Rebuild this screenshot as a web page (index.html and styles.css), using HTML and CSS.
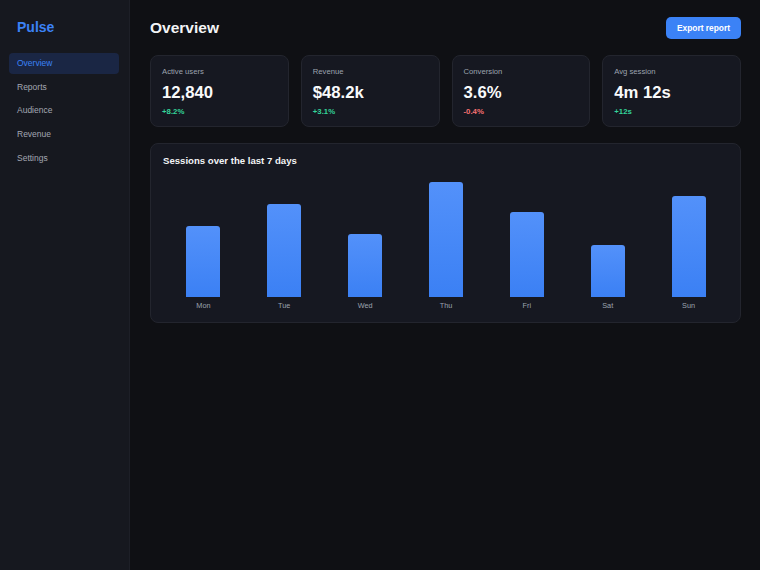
FILE: index.html
```html
<!DOCTYPE html>
<html lang="en">
<head>
	<meta charset="UTF-8">
	<meta name="viewport" content="width=device-width, initial-scale=1.0">
	<title>Pulse - Overview</title>
	<link rel="stylesheet" href="styles.css">
</head>
<body>
<aside class="sidebar">
	<div class="logo">Pulse</div>
	<nav class="nav">
		<a class="navItem active" href="#">Overview</a>
		<a class="navItem" href="#">Reports</a>
		<a class="navItem" href="#">Audience</a>
		<a class="navItem" href="#">Revenue</a>
		<a class="navItem" href="#">Settings</a>
	</nav>
</aside>

<main class="main">
	<header class="header">
		<h1 class="title">Overview</h1>
		<a class="exportBtn" href="#">Export report</a>
	</header>

	<section class="stats">
		<div class="card stat">
			<div class="statLabel">Active users</div>
			<div class="statValue">12,840</div>
			<div class="statDelta up">+8.2%</div>
		</div>
		<div class="card stat">
			<div class="statLabel">Revenue</div>
			<div class="statValue">$48.2k</div>
			<div class="statDelta up">+3.1%</div>
		</div>
		<div class="card stat">
			<div class="statLabel">Conversion</div>
			<div class="statValue">3.6%</div>
			<div class="statDelta down">-0.4%</div>
		</div>
		<div class="card stat">
			<div class="statLabel">Avg session</div>
			<div class="statValue">4m 12s</div>
			<div class="statDelta up">+12s</div>
		</div>
	</section>

	<section class="card chart">
		<h2 class="chartTitle">Sessions over the last 7 days</h2>
		<div class="plot">
			<div class="col"><div class="bar" style="height:61.8%"></div></div>
			<div class="col"><div class="bar" style="height:80.9%"></div></div>
			<div class="col"><div class="bar" style="height:54.4%"></div></div>
			<div class="col"><div class="bar" style="height:100%"></div></div>
			<div class="col"><div class="bar" style="height:73.5%"></div></div>
			<div class="col"><div class="bar" style="height:45.6%"></div></div>
			<div class="col"><div class="bar" style="height:88.2%"></div></div>
		</div>
		<div class="days">
			<span>Mon</span><span>Tue</span><span>Wed</span><span>Thu</span><span>Fri</span><span>Sat</span><span>Sun</span>
		</div>
	</section>
</main>
</body>
</html>
```

FILE: styles.css
```css
html, body {
	margin: 0;
	padding: 0;
	background: #0f1014;
	font-family: "Liberation Sans", Arial, Helvetica, sans-serif;
	color: #f3f4f6;
}

body {
	display: flex;
	min-height: 100vh;
}

a {
	text-decoration: none;
	color: inherit;
}

/* left navigation */
.sidebar {
	width: 130px;
	flex-shrink: 0;
	box-sizing: border-box;
	padding: 15px 10px 15px 9px;
	background: #16181f;
	border-right: 1px solid #1d1f27;
}

.logo {
	padding: 0 8px;
	font-size: 14px;
	line-height: 24px;
	font-weight: 700;
	color: #3b82f6;
	margin-bottom: 14px;
}

.nav {
	display: flex;
	flex-direction: column;
	gap: 2.7px;
}

.navItem {
	display: block;
	padding: 0 8px;
	height: 21px;
	line-height: 21px;
	font-size: 8.5px;
	color: #a3a7b2;
	border-radius: 4px;
}

.navItem.active {
	background: #1a2644;
	color: #3b82f6;
}

/* content */
.main {
	flex: 1;
	padding: 17px 19px 17px 20px;
	min-width: 0;
}

.header {
	display: flex;
	justify-content: space-between;
	align-items: center;
	margin-bottom: 16px;
}

.title {
	margin: 0;
	font-size: 15.5px;
	line-height: 22px;
	font-weight: 700;
	color: #f3f4f6;
}

.exportBtn {
	display: inline-block;
	height: 22px;
	line-height: 22px;
	padding: 0 11px;
	background: #3b82f6;
	color: #fff;
	font-size: 8.4px;
	font-weight: 700;
	border-radius: 5px;
}

.card {
	background: #161821;
	border: 1px solid #23252e;
	border-radius: 8px;
	box-sizing: border-box;
}

.stats {
	display: grid;
	grid-template-columns: repeat(4, 1fr);
	gap: 12px;
	margin-bottom: 16px;
}

.stat {
	padding: 11px 11px 9px;
}

.statLabel {
	font-size: 7.7px;
	line-height: 10px;
	color: #9ca3af;
}

.statValue {
	margin-top: 6px;
	font-size: 16.7px;
	line-height: 20px;
	font-weight: 700;
	color: #f9fafb;
}

.statDelta {
	margin-top: 4px;
	font-size: 7.8px;
	line-height: 10px;
	font-weight: 700;
}

.statDelta.up {
	color: #34d399;
}

.statDelta.down {
	color: #f87171;
}

/* bar chart */
.chart {
	padding: 11px 11px 11px 12px;
}

.chartTitle {
	margin: 0;
	font-size: 9.6px;
	line-height: 12px;
	font-weight: 700;
	color: #f3f4f6;
}

.plot {
	display: grid;
	grid-template-columns: repeat(7, 1fr);
	height: 115px;
	margin-top: 15px;
}

.col {
	display: flex;
	justify-content: center;
	align-items: flex-end;
}

.bar {
	width: 34px;
	border-radius: 3px 3px 0 0;
	background: linear-gradient(180deg, #5391fa 0%, #3b80f4 100%);
}

.days {
	display: grid;
	grid-template-columns: repeat(7, 1fr);
	margin-top: 4px;
	font-size: 7.3px;
	line-height: 10px;
	color: #9ca3af;
	text-align: center;
}
```
